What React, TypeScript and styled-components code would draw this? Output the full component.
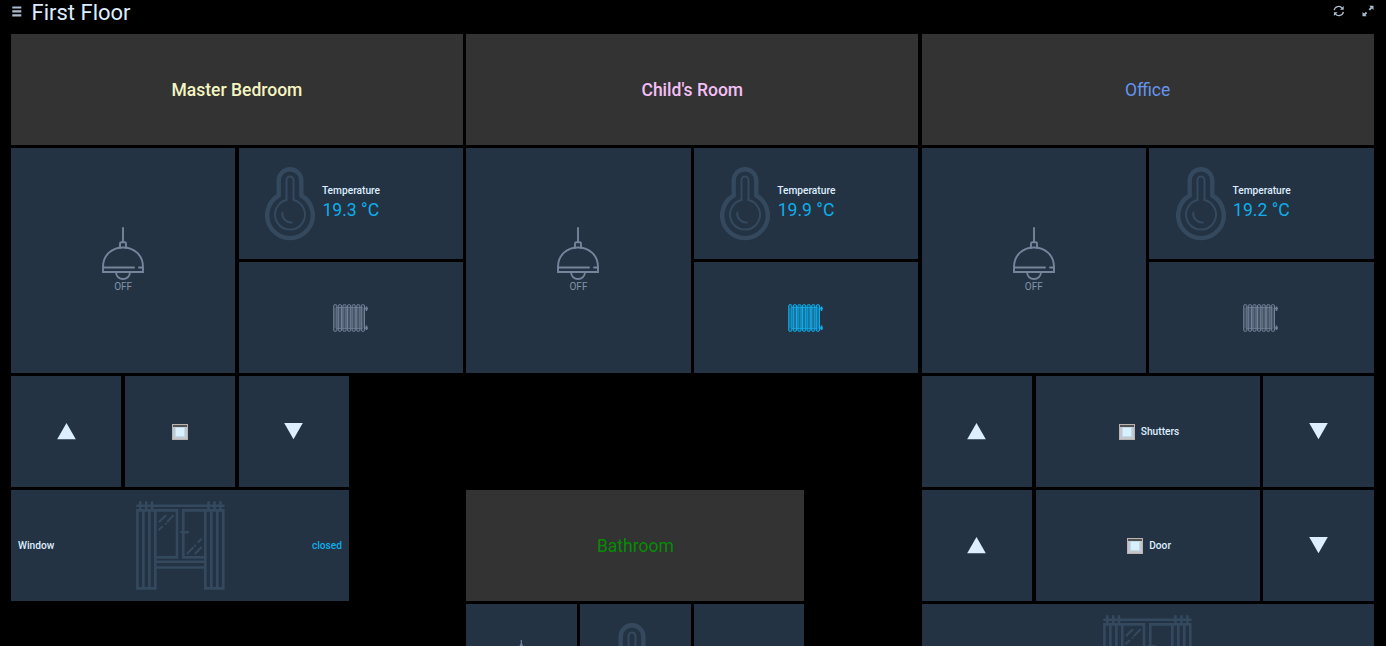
import React from "react";
import styled, { createGlobalStyle } from "styled-components";

const GlobalStyle = createGlobalStyle`
  html, body { margin: 0; background: #000; }
  body { height: 646px; overflow: hidden; font-family: Roboto, sans-serif; color: #def; }
  * { box-sizing: border-box; }
`;

const Page = styled.main`
  width: 1386px;
  height: 646px;
  overflow: hidden;
  background: #000;
`;

const Header = styled.header`
  display: flex;
  align-items: center;
  height: 34.45px;
  padding: 0 12px 10px 12px;
`;

const Title = styled.h1`
  flex: 1;
  margin: 1px 0 0 9.5px;
  font-size: 22px;
  line-height: 24px;
  font-weight: 400;
`;

const HeaderIcons = styled.div`
  display: flex;
  gap: 17px;
  padding-bottom: 2px;
`;

const Board = styled.div`
  display: grid;
  grid-template-columns: repeat(12, 110.35px);
  grid-auto-rows: 110.6px;
  column-gap: 3.49px;
  row-gap: 3.3px;
  padding-left: 11.05px;
`;

const Tile = styled.section<{ $col: number; $row: number; $w?: number; $h?: number }>`
  grid-column: ${(p) => p.$col} / span ${(p) => p.$w ?? 1};
  grid-row: ${(p) => p.$row} / span ${(p) => p.$h ?? 1};
  display: flex;
  align-items: center;
  justify-content: center;
  background: #233343;
`;

const RoomTile = styled(Tile)<{ $color: string; $weight?: number }>`
  padding-top: 0.8px;
  background: #333;
  color: ${(p) => p.$color};
  font-size: 17.5px;
  font-weight: ${(p) => p.$weight ?? 400};
`;

const LampTile = styled(Tile)<{ $compact?: boolean }>`
  flex-direction: column;
  padding-bottom: ${(p) => (p.$compact ? 22 : 1)}px;
  color: #8293a8;
  font-size: 10px;
  line-height: 12px;
`;

const LampState = styled.span`
  margin-top: 1px;
`;

const TemperatureTile = styled(Tile)<{ $compact?: boolean }>`
  justify-content: ${(p) => (p.$compact ? "center" : "flex-start")};
  padding: ${(p) => (p.$compact ? "1px 7px 0 0" : "1px 0 0 26.2px")};
`;

const Reading = styled.div`
  margin: 0 0 2px 7px;
`;

const Label = styled.div`
  font-size: 10.2px;
  line-height: 14px;
  font-weight: 500;
`;

const Value = styled.div`
  color: #0fadea;
  padding-left: 0.5px;
  font-size: 17.6px;
  line-height: 24px;
`;

const WindowTile = styled(Tile)`
  display: grid;
  grid-template-columns: 1fr 89px 1fr;
  padding: 0 7px;
`;

const WindowLabel = styled(Label)`
  padding-top: 1.4px;
`;

const ClosedState = styled(WindowLabel)`
  color: #0fadea;
  text-align: right;
`;

const StopTile = styled(Tile)<{ $labelled: boolean }>`
  padding: 2px 0 0 ${(p) => (p.$labelled ? 3 : 0)}px;
`;

const StopBox = styled.span`
  width: 16px;
  height: 16px;
  background: #d9f0ff;
  border: 1px solid #b9b5b3;
  box-shadow: inset 0 2px 0 #555254, inset 0 0 0 2px #c3c6ca, inset 0 0 0 3px #bfdcee;
`;

const StopLabel = styled(Label)`
  margin: 0 0 1px 6px;
`;

const Lamp = ({ scale = 1, stroke = 1.9 }: { scale?: number; stroke?: number }) => (
  <svg width={42 * scale} height={53 * scale} viewBox="0 0 42 53" fill="none" stroke="#74859c" strokeWidth={stroke} strokeLinecap="round">
    <path d="M21 1v14M18 21v-4.5q0-1.3 1.3-1.3h3.4q1.3 0 1.3 1.3V21" />
    <path d="M1 45V40C1 28.500 9.500 20.500 21 20.500S41 28.500 41 40v5ZM1 40.500h31M37 40.500h3M14 45c0 9.300 14 9.300 14 0" />
  </svg>
);

const Thermometer = () => (
  <svg width="50" height="74" viewBox="0 0 50 74" fill="none" stroke="#34495e">
    <path strokeWidth="4.4" d="M13.700 28.500V13.500a11.300 11.300 0 0 1 22.600 0v15a22.800 22.800 0 1 1-22.600 0Z" />
    <path strokeWidth="2" d="M21.500 33V13a3.500 3.500 0 0 1 7 0V33a15 15 0 1 1-7 0Z" />
    <path strokeWidth="2" strokeLinecap="round" d="M17.300 45.500a9 9 0 0 0 9.500 10" />
  </svg>
);

const RadiatorIcon = styled.svg`
  margin-top: 1px;
`;

const Radiator = ({ on }: { on?: boolean }) => {
  const color = on ? "#0fadea" : "#718096";
  return (
    <RadiatorIcon width="36" height="28" viewBox="0 0 36 28" fill="none" stroke={color} strokeWidth="1">
      <path d="M1 4h31v20H1Z" stroke="none" fill={color} fillOpacity="0.3" />
      {[0, 1, 2, 3, 4, 5, 6].map((i) => (
        <rect key={i} x={0.7 + i * 4.6} y="0.6" width="3.200" height="26.800" rx="1.300" fill={color} fillOpacity={on ? 0.35 : 0.2} />
      ))}
      <path d="M3.500 3.500h26M3.500 24.500h26" strokeOpacity="0.8" />
      <path d="M31.500 4.500h3.500M31.500 24h3.500M33.500 2.500v4.500M33.500 21.500v4.500" strokeWidth="1.600" />
    </RadiatorIcon>
  );
};

const WindowIcon = () => (
  <svg width="89" height="89" viewBox="0 0 89 89" fill="none" stroke="#34495e" strokeWidth="2.600" strokeLinecap="round">
    <path d="M1.300 4.700h86.200M4.300 1.300v7M10.200 1.300v7M16 1.300v7M72.500 1.300v7M78.500 1.300v7M84.400 1.300v7" />
    <path d="M1.400 9.400h17.900v78H1.400ZM7.400 9.400v78M13.400 9.400v78M69.300 9.400h18v78h-18ZM75.300 9.400v78M81.300 9.400v78" />
    <path d="M19.300 9.400H41v47H19.300M69.300 9.400h-22v47h22M20 60.700h49M20 66.500h49M45.300 31.300h6.500" />
    <path strokeWidth="2.200" d="m23.500 20.500 6-5.700M31.500 20.500l5.500-5.700M23.300 28.500l2.800-2.700M29.600 22.800h.1M51.300 52.500l5.700-5.800M59.300 52.500l5.700-5.800M59 44.700h.1M62.300 41l2.700-2.700" />
  </svg>
);

const Arrow = ({ down }: { down?: boolean }) => (
  <svg width="19" height="17" viewBox="0 0 19 17" fill="#def">
    <path d={down ? "M.2 0h18.600L9.500 16.300Z" : "M.2 16.300h18.600L9.500 0Z"} />
  </svg>
);

const MenuIcon = () => (
  <svg width="10" height="12" viewBox="0 0 10 12" fill="#abbccf">
    <path d="M.3 .4h9v2.200h-9ZM.3 4.300h9v2.200h-9ZM.3 8.200h9v2.200h-9Z" />
  </svg>
);

const RefreshIcon = () => (
  <svg width="12" height="12" viewBox="0 0 12 12" fill="none" stroke="#abbccf" strokeWidth="1.300">
    <path d="M1.200 5.200A4.500 4.500 0 0 1 9.200 3.200M10.400 6.800A4.500 4.500 0 0 1 2.400 8.800" />
    <path d="M10.700 1v3.700H7ZM.9 11V7.300h3.700Z" fill="#abbccf" stroke="none" />
  </svg>
);

const ExpandIcon = () => (
  <svg width="12" height="12" viewBox="0 0 12 12" fill="#abbccf" stroke="#abbccf">
    <path stroke="none" d="M7.200 .7h4.300V5ZM.5 6.900v4.300h4.300Z" />
    <path strokeWidth="1.900" d="m7.300 4.900 2.200-2.200M4.500 7.500 2.400 9.600" />
  </svg>
);

const Shutter = ({ col, row, label }: { col: number; row: number; label?: string }) => (
  <>
    <Tile $col={col} $row={row}><Arrow /></Tile>
    <StopTile $col={col + 1} $row={row} $w={label ? 2 : 1} $labelled={!!label}>
      <StopBox />
      {label && <StopLabel>{label}</StopLabel>}
    </StopTile>
    <Tile $col={col + (label ? 3 : 2)} $row={row}><Arrow down /></Tile>
  </>
);

const rooms = [
  { name: "Master Bedroom", color: "#f5f5c0", weight: 500, temperature: "19.3 °C", heating: false },
  { name: "Child's Room", color: "#f5c0f5", weight: 500, temperature: "19.9 °C", heating: true },
  { name: "Office", color: "#6495ed", weight: 400, temperature: "19.2 °C", heating: false },
];

export default function App() {
  return (
    <Page>
      <GlobalStyle />
      <Header>
        <MenuIcon />
        <Title>First Floor</Title>
        <HeaderIcons>
          <RefreshIcon />
          <ExpandIcon />
        </HeaderIcons>
      </Header>
      <Board>
        {rooms.map((room, i) => {
          const col = i * 4 + 1;
          return (
            <React.Fragment key={room.name}>
              <RoomTile $col={col} $row={1} $w={4} $color={room.color} $weight={room.weight}>{room.name}</RoomTile>
              <LampTile $col={col} $row={2} $w={2} $h={2}>
                <Lamp />
                <LampState>OFF</LampState>
              </LampTile>
              <TemperatureTile $col={col + 2} $row={2} $w={2}>
                <Thermometer />
                <Reading>
                  <Label>Temperature</Label>
                  <Value>{room.temperature}</Value>
                </Reading>
              </TemperatureTile>
              <Tile $col={col + 2} $row={3} $w={2}><Radiator on={room.heating} /></Tile>
            </React.Fragment>
          );
        })}
        <Shutter col={1} row={4} />
        <Shutter col={9} row={4} label="Shutters" />
        <Shutter col={9} row={5} label="Door" />
        <WindowTile $col={1} $row={5} $w={3}>
          <WindowLabel>Window</WindowLabel>
          <WindowIcon />
          <ClosedState>closed</ClosedState>
        </WindowTile>
        <RoomTile $col={5} $row={5} $w={3} $color="#058c05">Bathroom</RoomTile>
        <LampTile $col={5} $row={6} $compact>
          <Lamp scale={0.3} stroke={4} />
        </LampTile>
        <TemperatureTile $col={6} $row={6} $compact><Thermometer /></TemperatureTile>
        <Tile $col={7} $row={6} />
        <Tile $col={9} $row={6} $w={4}><WindowIcon /></Tile>
      </Board>
    </Page>
  );
}
